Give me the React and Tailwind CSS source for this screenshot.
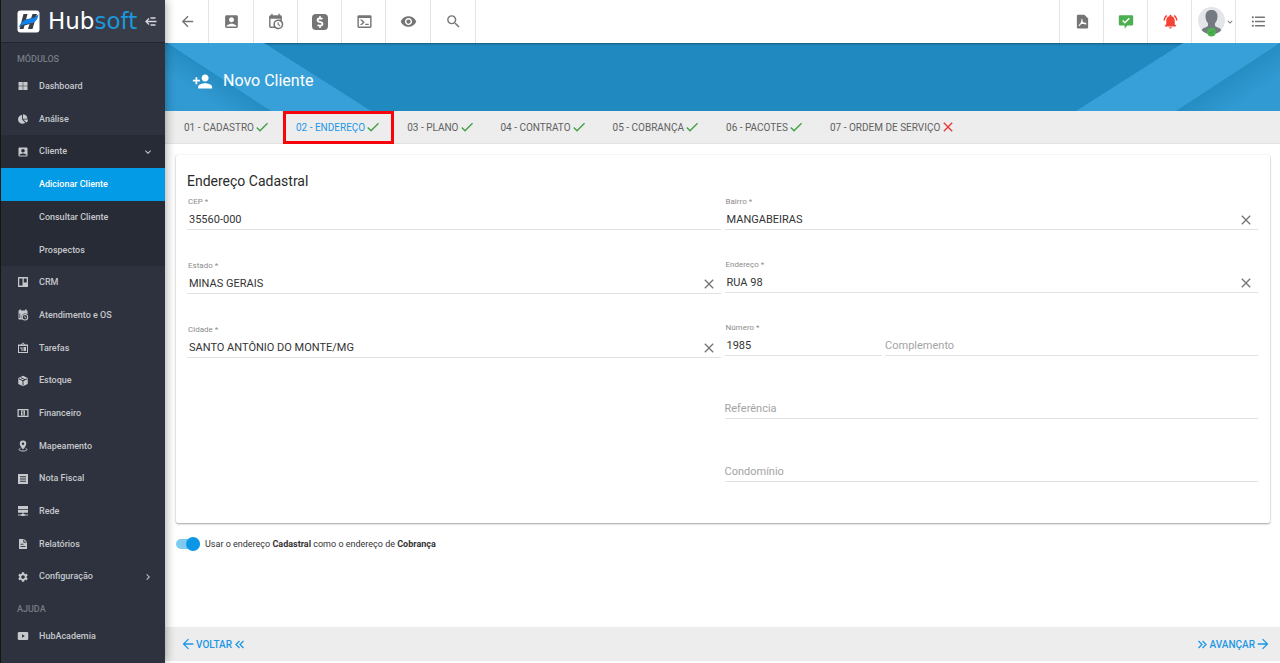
import {
  MdAccountBox, MdArrowBack, MdArrowForward, MdCheck, MdClose,
  MdFormatListBulleted, MdKeyboardArrowDown, MdKeyboardArrowRight,
  MdNotificationsActive, MdPersonAdd, MdSearch, MdSettings, MdVisibility,
} from "react-icons/md";
import { FaChartPie, FaDollarSign } from "react-icons/fa";

function Svg({ size = 16, children, className = "" }) {
  return (
    <svg width={size} height={size} viewBox="0 0 24 24" fill="currentColor" className={className} aria-hidden="true">
      {children}
    </svg>
  );
}

const CalendarClock = ({ size }) => (
  <Svg size={size}>
    <path d="M15,13H16.5V15.82L18.94,17.23L18.19,18.53L15,16.69V13M19,8H5V19H9.67C9.24,18.09 9,17.07 9,16A7,7 0 0,1 16,9C17.07,9 18.09,9.24 19,9.67V8M5,21C3.89,21 3,20.1 3,19V5C3,3.89 3.89,3 5,3H6V1H8V3H16V1H18V3H19A2,2 0 0,1 21,5V11.1C22.24,12.36 23,14.09 23,16A7,7 0 0,1 16,23C14.09,23 12.36,22.24 11.1,21H5M16,11.15A4.85,4.85 0 0,0 11.15,16C11.15,18.68 13.32,20.85 16,20.85A4.85,4.85 0 0,0 20.85,16C20.85,13.32 18.68,11.15 16,11.15Z" />
  </Svg>
);

const Console = ({ size }) => (
  <Svg size={size}>
    <path d="M20,19V7H4V19H20M20,3A2,2 0 0,1 22,5V19A2,2 0 0,1 20,21H4A2,2 0 0,1 2,19V5C2,3.89 2.9,3 4,3H20M13,17V15H18V17H13M9.58,13L5.57,9H8.4L11.7,12.3C12.09,12.69 12.09,13.33 11.7,13.72L8.42,17H5.59L9.58,13Z" />
  </Svg>
);

const PdfFile = ({ size }) => (
  <Svg size={size}>
    <path d="M5 1h10l6 6v14a2 2 0 0 1-2 2H5a2 2 0 0 1-2-2V3a2 2 0 0 1 2-2Z" />
    <path d="M6.500 18.500c2.200-1.200 5-6.200 4.600-10.200M11 10.500c1 3.500 3.200 5.300 6.500 5.300M8 16.200c2-1.200 5.500-2 9-1.200" fill="none" stroke="#fff" strokeWidth="1.700" strokeLinecap="round" />
  </Svg>
);

const ChatCheck = ({ size }) => (
  <Svg size={size}>
    <path d="M3 2h18a1.800 1.800 0 0 1 1.800 1.800V15.500a1.800 1.800 0 0 1-1.800 1.800H14l-4 5v-5H3a1.800 1.800 0 0 1-1.800-1.800V3.800A1.800 1.800 0 0 1 3 2Z" />
    <path d="m7 9.800 3.300 3.300L17 6.300" fill="none" stroke="#fff" strokeWidth="2.200" />
  </Svg>
);

const Tiles = () => (
  <Svg size={12}><path d="M3 4h8.500v7.500H3zM12.500 4H21v7.500h-8.500zM3 12.500h8.500V20H3zM12.500 12.500H21V20h-8.500z" /></Svg>
);
const Board = () => (
  <Svg size={12}><path fillRule="evenodd" d="M3 2h18a1 1 0 0 1 1 1v18a1 1 0 0 1-1 1H3a1 1 0 0 1-1-1V3a1 1 0 0 1 1-1Zm1.500 3v14H11V5Zm9 0v8h6V5Z" /></Svg>
);
const CalendarSmall = () => (
  <Svg size={12}>
    <path d="M5 1h3v2h8V1h3v2h2v8a7 7 0 0 0-5-2c-4 0-7 3-7 7 0 2 .7 3.500 2 5H3V3h2Z" />
    <path d="M5.500 9v9" stroke="#2d323e" strokeWidth="1.500" />
    <path fillRule="evenodd" d="M16 10a6.500 6.500 0 1 1 0 13 6.500 6.500 0 0 1 0-13Zm0 2a4.500 4.500 0 1 0 0 9 4.500 4.500 0 0 0 0-9Zm-1 1.500h1.600v2.600l2.400 1.400-.8 1.400-3.200-2Z" />
  </Svg>
);
const Briefcase = () => (
  <Svg size={12}>
    <path fillRule="evenodd" d="M8 5 12 1l4 4h6v17H2V5Zm-4 3v12h16V8Zm6-3h4l-2-2Z" />
    <path d="M6 11h5v2H6zM9 13h2v5H9zM13 10h5v8h-5z" />
  </Svg>
);
const Package = () => (
  <Svg size={12}>
    <path d="M12 1.500 21.500 6v12L12 22.500 2.500 18V6Z" />
    <path d="M3.500 7.500 12 11.500l8.500-4M12 11.500V21M7.500 5l8.500 4.500" fill="none" stroke="#2d323e" strokeWidth="1.900" />
  </Svg>
);
const Cash = () => (
  <Svg size={12}>
    <path fillRule="evenodd" d="M1 4h22v16H1Zm2.500 2.500v11h17v-11Z" />
    <path d="M8 7h8v10H8z" />
    <path d="M14 9.500h-3.500V12h3v2.500H10" fill="none" stroke="#2d323e" strokeWidth="1.300" />
  </Svg>
);
const MapPin = () => (
  <Svg size={12}>
    <path fillRule="evenodd" d="M12 1a6.500 6.500 0 0 1 6.500 6.500C18.500 12 12 19 12 19S5.500 12 5.500 7.500A6.500 6.500 0 0 1 12 1Zm0 4a2.500 2.500 0 1 0 0 5 2.500 2.500 0 0 0 0-5Z" />
    <path d="M7 16.500c-6 2.500-2 5.500 5 5.500s11-3 5-5.500" fill="none" stroke="currentColor" strokeWidth="2" />
  </Svg>
);
const Network = () => (
  <Svg size={12}><path d="M2 2h20v6H2zM2 9.500h20v6H2zM11 15h2v4h9v2H2v-2h9zM8.500 18h7v4h-7z" /></Svg>
);
const Receipt = () => (
  <Svg size={12}><path fillRule="evenodd" d="M2 2h20v20H2Zm4 4.500v2h12v-2Zm0 4.500v2h12v-2Zm0 4.500v2h12v-2Z" /></Svg>
);
const Report = () => (
  <Svg size={12}>
    <path d="M4 2h10l6 6v14H4Z" />
    <path d="M7 12.500h6M7 17h10M13.500 3v5.500H19" fill="none" stroke="#2d323e" strokeWidth="1.800" />
  </Svg>
);
const Play = () => (
  <Svg size={12}><path fillRule="evenodd" d="M4 4h16a2.500 2.500 0 0 1 2.500 2.500v11A2.500 2.500 0 0 1 20 20H4a2.500 2.500 0 0 1-2.500-2.500v-11A2.500 2.500 0 0 1 4 4Zm6 4.500v7l5.500-3.500Z" /></Svg>
);

const MODULES = [
  { label: "Dashboard", icon: <Tiles /> },
  { label: "Análise", icon: <FaChartPie size={10} /> },
  { label: "Cliente", icon: <MdAccountBox size={12} />, open: true, arrow: <MdKeyboardArrowDown size={12} /> },
  { label: "Adicionar Cliente", active: true },
  { label: "Consultar Cliente", open: true },
  { label: "Prospectos", open: true },
  { label: "CRM", icon: <Board /> },
  { label: "Atendimento e OS", icon: <CalendarSmall /> },
  { label: "Tarefas", icon: <Briefcase /> },
  { label: "Estoque", icon: <Package /> },
  { label: "Financeiro", icon: <Cash /> },
  { label: "Mapeamento", icon: <MapPin /> },
  { label: "Nota Fiscal", icon: <Receipt /> },
  { label: "Rede", icon: <Network /> },
  { label: "Relatórios", icon: <Report /> },
  { label: "Configuração", icon: <MdSettings size={12} />, arrow: <MdKeyboardArrowRight size={12} /> },
];

function NavItem({ item }) {
  const tone = item.active
    ? "bg-[#039be5] text-white"
    : item.open
      ? "bg-[#272b35] text-[#c6c8cc]"
      : "text-[#c6c8cc]";
  return (
    <a href="#" className={`flex min-h-8 flex-1 items-center gap-[10px] pr-[11px] pl-4 text-[9px] font-medium ${tone}`}>
      <span className="flex w-3 shrink-0 justify-center">{item.icon}</span>
      <span className="flex-1 pt-px">{item.label}</span>
      {item.arrow}
    </a>
  );
}

function Sidebar() {
  return (
    <aside className="z-10 flex w-[165px] shrink-0 flex-col border-l border-[#10180f] bg-[#2d323e] shadow-[0_0_10px_rgba(0,0,0,0.4)]">
      <div className="flex h-[43px] items-center border-b border-[#22262f] bg-[#383c49] pl-4">
        <svg width="23" height="23" viewBox="0 0 23 23" aria-hidden="true">
          <rect x="0.500" y="0.500" width="22" height="22" rx="3" fill="#fff" />
          <path d="M6.500 4h4L9 9.500l5-1L15.500 4h4.500l-4.500 15H11l1.500-5-5 1.500L6.500 19H2.500Z" fill="#3b3e44" />
          <path d="M1.500 17.500C4 11.500 8 9 13.500 8.500 17 8 19.500 6.500 21.500 4c-.5 6-3.500 9-9 9.500-5 .3-8 1.500-11 4Z" fill="#1283ea" />
        </svg>
        <span className="ml-2 font-['DejaVu_Sans',sans-serif] text-[23px] leading-none text-white">
          Hub<span className="text-[#1c97dc]">soft</span>
        </span>
        <button type="button" aria-label="Recolher menu" className="ml-2 text-[#d7d8db]">
          <svg width="12" height="11" viewBox="0 0 12 11" fill="none" stroke="currentColor" strokeWidth="1.300" aria-hidden="true">
            <path d="M5.500 2H10.500M1 5.500h10.500M5.500 9H10.500M4 2.500l-3 3 3 3" />
          </svg>
        </button>
      </div>
      <h2 className="flex h-[27px] items-center pt-[6px] pl-4 text-[9px] font-medium text-[#777b84]">MÓDULOS</h2>
      <nav className="flex flex-1 flex-col" aria-label="Módulos">
        {MODULES.map((m) => <NavItem key={m.label} item={m} />)}
      </nav>
      <h2 className="flex h-[27px] items-center pt-[6px] pl-4 text-[9px] font-medium text-[#777b84]">AJUDA</h2>
      <nav className="mb-[11px] flex h-8 flex-col" aria-label="Ajuda">
        <NavItem item={{ label: "HubAcademia", icon: <Play /> }} />
      </nav>
    </aside>
  );
}

function BarButton({ label, children, className = "text-[#757575]" }) {
  return (
    <button type="button" aria-label={label} className={`flex items-center justify-center pl-px ${className}`}>
      {children}
    </button>
  );
}

function TopBar() {
  return (
    <header className="flex h-[43px] justify-between bg-white">
      <div className="grid w-[311px] grid-cols-7 divide-x divide-[#e4e4e4] border-r border-[#e4e4e4]">
        <BarButton label="Voltar"><MdArrowBack size={17} /></BarButton>
        <BarButton label="Clientes"><MdAccountBox size={17} /></BarButton>
        <BarButton label="Agenda"><CalendarClock size={17} /></BarButton>
        <BarButton label="Financeiro">
          <span className="flex size-4 items-center justify-center rounded bg-[#757575] text-white"><FaDollarSign size={12} /></span>
        </BarButton>
        <BarButton label="Terminal"><Console size={17} /></BarButton>
        <BarButton label="Visualizar"><MdVisibility size={17} /></BarButton>
        <BarButton label="Pesquisar"><MdSearch size={17} /></BarButton>
      </div>
      <div className="grid w-[221px] grid-cols-5 divide-x divide-[#e4e4e4] border-l border-[#e4e4e4]">
        <BarButton label="PDF"><PdfFile size={15} /></BarButton>
        <BarButton label="Mensagens" className="text-[#4caf50]"><ChatCheck size={16} /></BarButton>
        <BarButton label="Notificações" className="text-[#f44336]"><MdNotificationsActive size={17} /></BarButton>
        <button type="button" aria-label="Conta" className="flex items-center justify-end text-[#757575]">
          <svg width="27" height="30" viewBox="0 0 27 30" aria-hidden="true">
            <circle cx="13.500" cy="13.500" r="13.500" fill="#e3e5e8" />
            <path d="M13.500 3c4 0 6 2.600 6 6.200 0 3-.9 5.300-2.500 7v2.300c0 1.500 5 2 6.500 4.500A13.500 13.500 0 0 1 3.500 23c1.500-2.500 6.500-3 6.500-4.500v-2.300C8.400 14.500 7.500 12.200 7.500 9.200 7.500 5.600 9.500 3 13.500 3Z" fill="#747982" />
            <circle cx="13.500" cy="25" r="4.500" fill="#4caf50" />
            <path d="m11.500 25 1.500 1.500 2.500-2.700" fill="none" stroke="#3a9440" strokeWidth="1" />
          </svg>
          <MdKeyboardArrowDown size={10} />
        </button>
        <BarButton label="Lista"><MdFormatListBulleted size={17} /></BarButton>
      </div>
    </header>
  );
}

function Banner() {
  return (
    <div className="relative flex h-[68px] items-center bg-[#2089bf] pt-2 pl-[27px] text-white shadow-[inset_0_2px_2px_-1px_rgba(0,0,0,0.35)]">
      <svg className="absolute top-0 left-0" width="206" height="68" viewBox="0 0 206 68" aria-hidden="true">
        <defs>
          <linearGradient id="foldLeft" gradientUnits="userSpaceOnUse" x1="53" y1="34" x2="39" y2="55">
            <stop offset="0" stopColor="#268dc3" />
            <stop offset="1" stopColor="#319ad2" />
          </linearGradient>
        </defs>
        <path d="M0 0 106 68H0Z" fill="url(#foldLeft)" />
        <path d="M2 0H99L206 68H106Z" fill="#38a0d8" />
      </svg>
      <svg className="absolute top-0 right-0" width="204" height="68" viewBox="0 0 204 68" aria-hidden="true">
        <defs>
          <linearGradient id="foldRight" gradientUnits="userSpaceOnUse" x1="152" y1="34" x2="168" y2="58">
            <stop offset="0" stopColor="#268dc3" />
            <stop offset="1" stopColor="#319ad2" />
          </linearGradient>
        </defs>
        <path d="M204 0 100 68H204Z" fill="url(#foldRight)" />
        <path d="M107 0H204L100 68H0Z" fill="#38a0d8" />
      </svg>
      <div className="relative flex items-center gap-[10px]">
        <MdPersonAdd size={21} />
        <h1 className="text-base">Novo Cliente</h1>
      </div>
    </div>
  );
}

const TABS = [
  { label: "01 - CADASTRO", ok: true },
  { label: "02 - ENDEREÇO", ok: true, active: true },
  { label: "03 - PLANO", ok: true },
  { label: "04 - CONTRATO", ok: true },
  { label: "05 - COBRANÇA", ok: true },
  { label: "06 - PACOTES", ok: true },
  { label: "07 - ORDEM DE SERVIÇO", ok: false },
];

function Tabs() {
  return (
    <div role="tablist" className="flex h-[33px] border-b border-[#e2e2e2] bg-[#ededed] pl-[6px]">
      {TABS.map((t) => (
        <button
          key={t.label}
          type="button"
          role="tab"
          aria-selected={!!t.active}
          className={`relative flex items-center px-[13px] text-[10px] whitespace-nowrap ${t.active ? "text-[#1e96e8]" : "text-[#616161]"}`}
        >
          {t.label}
          {t.ok ? <MdCheck size={16} className="text-[#43a047]" /> : <MdClose size={16} className="text-[#e53935]" />}
          {t.active && <span className="absolute inset-x-0 top-0 -bottom-px border-3 border-[#f6050c]" />}
        </button>
      ))}
    </div>
  );
}

const CAPTION = "h-3 pl-px text-[8px] leading-3 text-[#8c8c8c]";
const CAPTION_IN_FIELD = "pointer-events-none absolute bottom-0 left-0 flex h-[22px] items-center pt-[2px] text-[11px] text-[#a3a3a3]";

function Field({ id, label, value, required, clearable }) {
  return (
    <div className="relative flex h-[34px] flex-col justify-end">
      <label htmlFor={id} className={value ? CAPTION : CAPTION_IN_FIELD}>
        {label}{required && " *"}
      </label>
      <div className="flex h-[22px] border-b border-[#e2e2e2]">
        <input
          id={id}
          defaultValue={value}
          className="min-w-0 flex-1 bg-transparent pt-[3px] pl-[2px] text-[11px] text-[#333] outline-none"
        />
        {clearable && (
          <button type="button" aria-label={`Limpar ${label}`} className="flex w-6 items-center justify-center pt-[2px] text-[#757575]">
            <MdClose size={16} />
          </button>
        )}
      </div>
    </div>
  );
}

export default function App() {
  return (
    <div className="flex min-h-screen bg-white font-[Roboto,sans-serif] text-[#212121]">
      <Sidebar />
      <div className="flex min-w-0 flex-1 flex-col">
        <TopBar />
        <Banner />
        <Tabs />
        <main className="flex-1 pt-[11px] pr-[10px] pl-[11px]">
          <section className="rounded-[2px] pt-4 pr-3 pb-[41px] pl-[11px] shadow-[0_1px_2px_rgba(0,0,0,0.35),0_0_2px_rgba(0,0,0,0.1)]">
            <h2 className="mb-[5px] text-sm text-[#2b2b2b]">Endereço Cadastral</h2>
            <div className="grid grid-cols-2 items-start gap-x-1">
              <div className="flex flex-col gap-[30px]">
                <Field id="cep" label="CEP" value="35560-000" required />
                <Field id="estado" label="Estado" value="MINAS GERAIS" required clearable />
                <Field id="cidade" label="Cidade" value="SANTO ANTÔNIO DO MONTE/MG" required clearable />
              </div>
              <div className="flex flex-col gap-[29px]">
                <Field id="bairro" label="Bairro" value="MANGABEIRAS" required clearable />
                <Field id="endereco" label="Endereço" value="RUA 98" required clearable />
                <div className="grid grid-cols-[30fr_71fr] gap-x-[3px]">
                  <Field id="numero" label="Número" value="1985" required />
                  <Field id="complemento" label="Complemento" />
                </div>
                <Field id="referencia" label="Referência" />
                <Field id="condominio" label="Condomínio" />
              </div>
            </div>
          </section>
          <div className="mt-[14px] flex items-center gap-[5px]">
            <input
              id="mesmo"
              type="checkbox"
              role="switch"
              defaultChecked
              className="relative h-[10px] w-6 appearance-none rounded-full bg-[#7fcbf0] after:absolute after:top-[-2px] after:right-0 after:size-[14px] after:rounded-full after:bg-[#0c97e6]"
            />
            <label htmlFor="mesmo" className="text-[9px] leading-[14px] text-[#333]">
              Usar o endereço <b>Cadastral</b> como o endereço de <b>Cobrança</b>
            </label>
          </div>
        </main>
        <footer className="mb-[2px] flex h-[34px] items-center justify-between bg-[#ededed] pr-[9px] pl-[15px] text-[10px] font-medium text-[#1b97e6]">
          <button type="button" className="flex items-center">
            <MdArrowBack size={16} />
            VOLTAR
            <svg className="ml-[3px]" width="9" height="9" viewBox="0 0 9 9" fill="none" stroke="currentColor" strokeWidth="1.300" aria-hidden="true">
              <path d="M4.500 1 1 4.500 4.500 8M8.500 1 5 4.500 8.500 8" />
            </svg>
          </button>
          <button type="button" className="flex items-center">
            <svg className="mr-[3px]" width="9" height="9" viewBox="0 0 9 9" fill="none" stroke="currentColor" strokeWidth="1.300" aria-hidden="true">
              <path d="M.5 1 4 4.500.5 8M4.500 1 8 4.500 4.500 8" />
            </svg>
            AVANÇAR
            <MdArrowForward size={16} />
          </button>
        </footer>
      </div>
    </div>
  );
}
